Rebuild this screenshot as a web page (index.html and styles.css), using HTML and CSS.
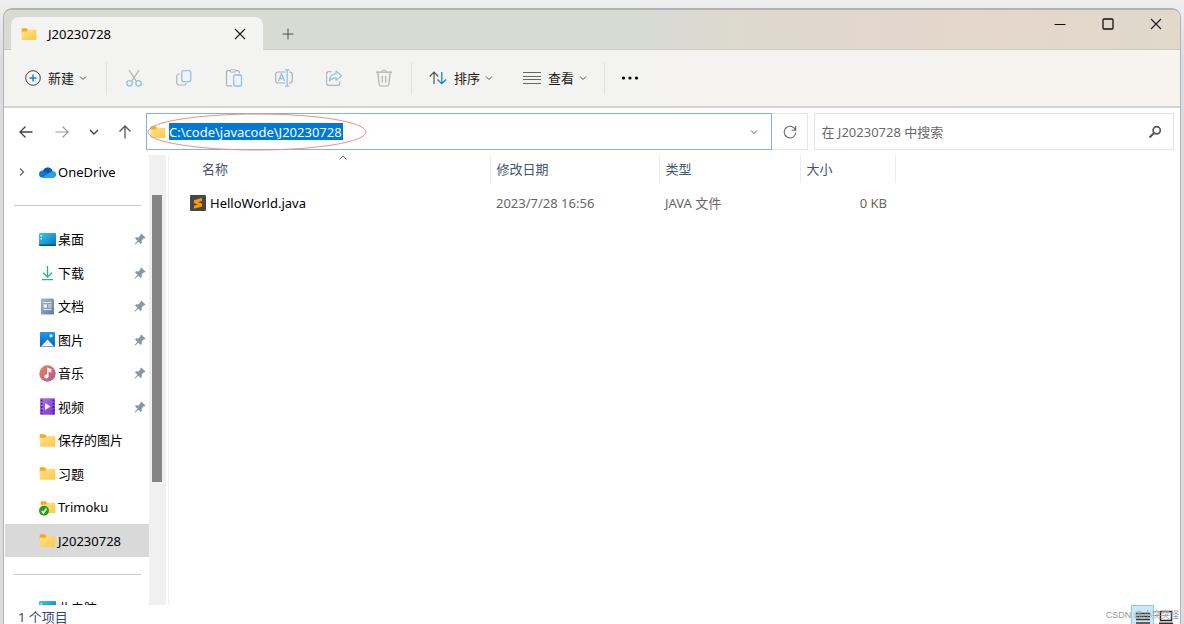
FILE: index.html
```html
<!DOCTYPE html>
<html lang="zh-CN">
<head>
<meta charset="utf-8">
<meta name="viewport" content="width=device-width, initial-scale=1">
<title>J20230728</title>
<link rel="stylesheet" href="styles.css">
</head>
<body>
<svg class="defs" aria-hidden="true">
  <defs>
    <linearGradient id="g-folder" x1="0" y1="0" x2="1" y2="1"><stop offset="0" stop-color="#ffe391"/><stop offset="1" stop-color="#ffc842"/></linearGradient>
    <linearGradient id="g-desk" x1="0" y1="0" x2="1" y2="1"><stop offset="0" stop-color="#35cfe6"/><stop offset="1" stop-color="#0a6cc0"/></linearGradient>
    <linearGradient id="g-doc" x1="0" y1="0" x2="1" y2="1"><stop offset="0" stop-color="#a3bad2"/><stop offset="1" stop-color="#5f7d9f"/></linearGradient>
    <linearGradient id="g-pic" x1="0" y1="0" x2="0" y2="1"><stop offset="0" stop-color="#1c9be8"/><stop offset="1" stop-color="#0665b8"/></linearGradient>
    <linearGradient id="g-music" x1="0" y1="0" x2="1" y2="1"><stop offset="0" stop-color="#ef8356"/><stop offset="1" stop-color="#b0579c"/></linearGradient>
    <linearGradient id="g-video" x1="0" y1="0" x2="1" y2="1"><stop offset="0" stop-color="#b071f0"/><stop offset="1" stop-color="#7a35cf"/></linearGradient>
  </defs>
  <symbol id="folder" viewBox="0 0 16 16"><path d="M1 2.2h4.4l1.6 1.5V7H.7V2.600q0-.4.3-.4z" fill="#f9a912"/><path d="M.7 5.400h5.100L7.300 3.800h7.500q.5 0 .5.500v9.100q0 .5-.5.500H1.200q-.5 0-.5-.5z" fill="url(#g-folder)"/></symbol>
  <symbol id="chev" viewBox="0 0 8 8"><path d="M1 2.500l3 3 3-3" fill="none" stroke="currentColor"/></symbol>
  <symbol id="pin" viewBox="0 0 12 12"><path d="M7.200.4l4.300 4.200-1 .9-.6-.2-2.200 2.300.1 2.400-1.100 1L4.400 8.700.9 11.700l-.5-.5 3.100-3.400L1 5.400l1-1.100 2.500.1L6.700 2.100l-.4-.7z" fill="#8797a3"/></symbol>
  <symbol id="cross" viewBox="0 0 12 12"><path d="M1 1l10 10M11 1L1 11" fill="none" stroke="currentColor" stroke-width="1.100"/></symbol>
  <symbol id="desktop" viewBox="0 0 17 14"><rect width="17" height="13" y=".5" rx="1" fill="url(#g-desk)"/><path d="M1.500 2.500h1.500v1.500H1.500zM1.500 5.500h1.500V7H1.500z" fill="#c9f5fb"/><path d="M0 12h17v.5q0 1-1 1H1q-1 0-1-1z" fill="#07528f"/></symbol>
</svg>

<div class="window">
  <header class="titlebar">
    <div class="tab">
      <svg class="i16"><use href="#folder"/></svg>
      <span class="tab-name">J20230728</span>
      <button class="plain" aria-label="关闭标签页"><svg class="i12"><use href="#cross"/></svg></button>
    </div>
    <button class="plain new-tab" aria-label="新标签页"><svg class="i12" viewBox="0 0 12 12"><path d="M6 .5v11M.5 6h11" fill="none" stroke="#555"/></svg></button>
    <div class="win-buttons">
      <button class="plain" aria-label="最小化"><svg class="i12" viewBox="0 0 12 12"><path d="M.5 6.500h11" stroke="#111" stroke-width="1.200"/></svg></button>
      <button class="plain" aria-label="最大化"><svg class="i12" viewBox="0 0 12 12"><rect x="1" y="1" width="10" height="10" rx="1" fill="none" stroke="#111" stroke-width="1.300"/></svg></button>
      <button class="plain" aria-label="关闭"><svg class="i12"><use href="#cross"/></svg></button>
    </div>
  </header>

  <div class="toolbar">
    <button class="tool">
      <svg class="i16" viewBox="0 0 16 16" fill="none"><circle cx="8" cy="8" r="7.300" stroke="#444"/><path d="M8 4.500v7M4.500 8h7" stroke="#1b7fd0" stroke-width="1.400"/></svg>
      <span>新建</span><svg class="i8"><use href="#chev"/></svg>
    </button>
    <div class="tool-icons">
      <button class="plain" aria-label="剪切"><svg class="i18" viewBox="0 0 18 18" fill="none"><path d="M4 1l7.500 11.300M14 1L6.500 12.300" stroke="#b0b0b0" stroke-width="1.200"/><circle cx="4.500" cy="14.300" r="2.700" stroke="#8ec3ec" stroke-width="1.300"/><circle cx="13.500" cy="14.300" r="2.700" stroke="#8ec3ec" stroke-width="1.300"/></svg></button>
      <button class="plain" aria-label="复制"><svg class="i18" viewBox="0 0 18 18" fill="none"><path d="M5 5H4Q1.700 5 1.700 7.300v6.200q0 2.500 2.500 2.500h4.500q2.300 0 2.500-2" stroke="#b5b5b5" stroke-width="1.200"/><rect x="6.800" y="1.700" width="9" height="11" rx="2" stroke="#8ec3ec" stroke-width="1.300"/></svg></button>
      <button class="plain" aria-label="粘贴"><svg class="i18" viewBox="0 0 18 18" fill="none"><path d="M7 16.800H2.800q-1.300 0-1.300-1.300V3q0-1.300 1.300-1.300H5m6 0h2q1.300 0 1.300 1.300v1.500" stroke="#b0b0b0" stroke-width="1.200"/><rect x="5" y=".7" width="6" height="2.400" rx="1.200" stroke="#b0b0b0"/><rect x="8.700" y="6" width="7.800" height="11" rx="1.300" stroke="#8ec3ec" stroke-width="1.300"/></svg></button>
      <button class="plain" aria-label="重命名"><svg class="i18" viewBox="0 0 18 18" fill="none"><path d="M10.500 3H3Q.7 3 .7 5.300v6.400Q.7 14 3 14h7.500M14 3h.8q2.500 0 2.500 2.500v6q0 2.500-2.500 2.500H14" stroke="#b0b0b0" stroke-width="1.200"/><path d="M3.500 12l3-7.200 3 7.200M4.600 9.500h3.800M12.200 1v16M10 .8h4.400M10 17.200h4.400" stroke="#8ec3ec" stroke-width="1.300"/></svg></button>
      <button class="plain" aria-label="共享"><svg class="i18" viewBox="0 0 18 18" fill="none"><path d="M6.500 2.700H4Q1.600 2.700 1.600 5v9q0 2.300 2.300 2.300h8.600q2.300 0 2.300-2.300v-1.500" stroke="#b5b5b5" stroke-width="1.200"/><path d="M11 2l5.500 4.700L11 11.400V8.900Q7 8.600 4.500 11.800 5 5 11 4.600z" stroke="#8ec3ec" stroke-width="1.200" stroke-linejoin="round"/></svg></button>
      <button class="plain" aria-label="删除"><svg class="i18" viewBox="0 0 18 18" fill="none"><path d="M1 3.200h16M6.800 3q.2-2 2.200-2t2.200 2M2.800 3.500l1.400 12q.2 1.500 1.600 1.500h6.400q1.400 0 1.600-1.500l1.400-12M7.300 7v6.500M10.700 7v6.500" stroke="#b0b0b0" stroke-width="1.200"/></svg></button>
    </div>
    <button class="tool sort">
      <svg class="i18" viewBox="0 0 18 18" fill="none"><path d="M5 15V3.500M.7 7.500L5 3l4.300 4.500" stroke="#555" stroke-width="1.200"/><path d="M12.800 3v11.500M8.500 10.500l4.300 4.200 4.300-4.200" stroke="#1b7fd0" stroke-width="1.300"/></svg>
      <span>排序</span><svg class="i8"><use href="#chev"/></svg>
    </button>
    <button class="tool view">
      <svg class="i18" viewBox="0 0 18 18"><path d="M0 3.500h18M0 7.500h18M0 10.500h18M0 14.500h18" stroke="#666" stroke-width="1.100"/></svg>
      <span>查看</span><svg class="i8"><use href="#chev"/></svg>
    </button>
    <button class="plain more" aria-label="更多"><svg class="i18" viewBox="0 0 18 18"><circle cx="2.500" cy="9" r="1.600"/><circle cx="9" cy="9" r="1.600"/><circle cx="15.500" cy="9" r="1.600"/></svg></button>
  </div>

  <div class="navbar">
    <div class="nav-buttons">
      <button class="plain" aria-label="后退"><svg class="i14" viewBox="0 0 14 14"><path d="M13.500 7H1M6.500 1.500L1 7l5.500 5.500" fill="none" stroke="#444" stroke-width="1.300"/></svg></button>
      <button class="plain" aria-label="前进"><svg class="i14" viewBox="0 0 14 14"><path d="M.5 7H13M7.500 1.500L13 7l-5.500 5.500" fill="none" stroke="#999" stroke-width="1.200"/></svg></button>
      <button class="plain" aria-label="最近的位置"><svg class="i14" viewBox="0 0 14 14"><path d="M3 5l4 4 4-4" fill="none" stroke="#444" stroke-width="1.400"/></svg></button>
      <button class="plain" aria-label="向上"><svg class="i14" viewBox="0 0 14 14"><path d="M7 13.500V1M1.500 6.500L7 1l5.500 5.500" fill="none" stroke="#555" stroke-width="1.300"/></svg></button>
    </div>
    <div class="address">
      <svg class="i16"><use href="#folder"/></svg>
      <input class="path" type="text" aria-label="地址" value="C:\code\javacode\J20230728">
      <button class="plain drop" aria-label="以前的位置"><svg class="i8"><use href="#chev"/></svg></button>
      <svg class="mark" viewBox="0 0 220 38" aria-hidden="true"><ellipse cx="110" cy="19" rx="109" ry="18" fill="none" stroke="#f08a8a"/></svg>
    </div>
    <button class="plain refresh" aria-label="刷新"><svg class="i14" viewBox="0 0 14 14"><path d="M12.500 5.200A5.800 5.800 0 1 0 12.800 7.500M12.700 1v4.300H8.500" fill="none" stroke="#666" stroke-width="1.100"/></svg></button>
    <div class="search">
      <input type="search" aria-label="搜索" placeholder="在 J20230728 中搜索">
      <svg class="i14" viewBox="0 0 14 14" fill="none" stroke="#555"><circle cx="8.700" cy="5.300" r="3.600" stroke-width="1.700"/><path d="M6 8L1.500 12.500" stroke-width="2"/></svg>
    </div>
  </div>

  <main class="content">
    <nav class="side" aria-label="导航窗格">
      <ul>
        <li class="row has-arrow"><svg class="i8 arrow" viewBox="0 0 8 8"><path d="M2 .5L5.500 4 2 7.500" fill="none" stroke="#666" stroke-width="1.300"/></svg><svg class="i17" viewBox="0 0 17 14"><path d="M4 5Q6 1.500 9.500 2q3 .5 4 3.500Q17 6 17 9q-.2 3-3.200 3.200H4Q0 12 0 8.500 .2 5.200 4 5z" fill="#0f78d4"/><path d="M4 5Q6 1.500 9.500 2q3 .5 4 3.500L9 8z" fill="#0a5bb0"/><path d="M3.200 12L13.500 5.500Q17 6 17 9q-.2 3-3.200 3.200H4z" fill="#28a0ea"/></svg><a href="#">OneDrive</a></li>
        <li class="line"></li>
        <li class="row"><svg class="i17"><use href="#desktop"/></svg><a href="#">桌面</a><svg class="i12 pin"><use href="#pin"/></svg></li>
        <li class="row"><svg class="i17" viewBox="0 0 17 17"><path d="M8.500 2v11M4 8.800l4.500 4.400L13 8.800M3 15.700h11" fill="none" stroke="#27b08b" stroke-width="1.300"/></svg><a href="#">下载</a><svg class="i12 pin"><use href="#pin"/></svg></li>
        <li class="row"><svg class="i17" viewBox="0 0 17 17"><rect x="2" y=".5" width="13" height="16" rx="1" fill="url(#g-doc)"/><path d="M4.500 4.500h8M9 7h3.500M9 9h3.500M4.500 11.500h8" stroke="#e8f0f8" stroke-width="1.200"/><rect x="4.500" y="6.300" width="3.500" height="3.500" fill="#e8f0f8"/></svg><a href="#">文档</a><svg class="i12 pin"><use href="#pin"/></svg></li>
        <li class="row"><svg class="i17" viewBox="0 0 17 17"><rect x="1" y="1" width="15" height="15" rx="1" fill="url(#g-pic)"/><path d="M2 15.500l6.500-7 6.500 7z" fill="#eef7ff"/><circle cx="12" cy="4.800" r="1.500" fill="#fff"/></svg><a href="#">图片</a><svg class="i12 pin"><use href="#pin"/></svg></li>
        <li class="row"><svg class="i17" viewBox="0 0 17 17"><circle cx="8.500" cy="8.500" r="8.200" fill="url(#g-music)"/><path d="M8.800 11.300V3.500l2.800 1v2L9.500 6" fill="none" stroke="#fff" stroke-width="1.400"/><circle cx="7.400" cy="11.500" r="2.100" fill="#fff"/></svg><a href="#">音乐</a><svg class="i12 pin"><use href="#pin"/></svg></li>
        <li class="row"><svg class="i17" viewBox="0 0 17 17"><rect x="1" y=".3" width="15" height="16.400" rx="1" fill="url(#g-video)"/><path d="M2.700 1.500v14.500M14.300 1.500v14.500" stroke="#3b1d70" stroke-width="1.500" stroke-dasharray="1.700 1.700"/><path d="M6 5l5.500 3.500L6 12z" fill="#fff"/></svg><a href="#">视频</a><svg class="i12 pin"><use href="#pin"/></svg></li>
        <li class="row"><svg class="i17"><use href="#folder"/></svg><a href="#">保存的图片</a></li>
        <li class="row"><svg class="i17"><use href="#folder"/></svg><a href="#">习题</a></li>
        <li class="row"><svg class="i17" viewBox="0 0 17 17"><use href="#folder" x="1" width="16" height="16"/><circle cx="5" cy="11.700" r="5" fill="#2a9d1f"/><path d="M2.700 12l1.700 2 3-4.500" fill="none" stroke="#fff" stroke-width="1.400"/></svg><a href="#">Trimoku</a></li>
        <li class="row current"><svg class="i17"><use href="#folder"/></svg><a href="#" aria-current="page">J20230728</a></li>
        <li class="line"></li>
        <li class="row"><svg class="i17"><use href="#desktop"/></svg><a href="#">此电脑</a></li>
      </ul>
    </nav>
    <div class="scroll"><div class="thumb"></div></div>
    <section class="files">
      <table>
        <colgroup><col class="c-name"><col class="c-date"><col class="c-type"><col class="c-size"></colgroup>
        <thead><tr>
          <th class="sorted">名称<svg class="i8 caret" viewBox="0 0 8 8"><path d="M.5 5.500L4 2l3.500 3.500" fill="none" stroke="#777"/></svg></th>
          <th>修改日期</th><th>类型</th><th>大小</th>
        </tr></thead>
        <tbody><tr>
          <td><span class="file"><svg class="i16" viewBox="0 0 16 16"><rect width="16" height="16" rx="1" fill="#474747"/><path d="M12 2.800v3.100L7.800 7.200 12 8.500v3L4 13.800v-3l4.200-1.300L4 8.200v-3z" fill="#ff9800"/></svg>HelloWorld.java</span></td>
          <td>2023/7/28 16:56</td><td>JAVA 文件</td><td class="num">0 KB</td>
        </tr></tbody>
      </table>
    </section>
  </main>

  <footer class="status">
    <span>1 个项目</span>
    <div class="views">
      <button class="plain on" aria-label="详细信息"><svg class="view-icon" viewBox="0 0 14 18"><path d="M0 7.500h14M0 10.500h14M0 13.500h14M0 17h14" stroke="#333" stroke-width="1.500"/></svg></button>
      <button class="plain" aria-label="大图标"><svg class="view-icon" viewBox="0 0 14 18"><rect x="1.500" y="5.500" width="11" height="9" fill="none" stroke="#222" stroke-width="1.500"/><path d="M0 17.500h14" stroke="#333" stroke-width="2"/></svg></button>
    </div>
  </footer>
</div>
<span class="watermark">CSDN @小突突怪</span>
</body>
</html>
```
FILE: styles.css
```css
* { box-sizing: border-box; }

body {
  margin: 0;
  height: 100vh;
  overflow: hidden;
  display: flex;
  padding: 8px 3px 0 3px;
  background: linear-gradient(#f0f0f0, #dcdcde 60px);
  font: 13px/18px "Noto Sans", "Noto Sans CJK SC", sans-serif;
  color: #1a1a1a;
}

.defs { position: absolute; width: 0; height: 0; }

svg { display: block; flex: none; }
.i8 { width: 8px; height: 8px; }
.i12 { width: 12px; height: 12px; }
.i14 { width: 14px; height: 14px; }
.i16 { width: 16px; height: 16px; }
.i17 { width: 17px; height: 17px; }
.i18 { width: 18px; height: 18px; }

button, input { font: inherit; color: inherit; }
.plain {
  display: grid;
  place-items: center;
  padding: 0;
  border: 0;
  background: none;
}

.window {
  flex: 1;
  min-width: 0;
  display: flex;
  flex-direction: column;
  overflow: hidden;
  border: 1px solid #b0b2b3;
  border-top-width: 2px;
  border-bottom: 0;
  border-radius: 9px 9px 0 0;
  background: #fff;
}

.titlebar {
  display: flex;
  flex: none;
  height: 40px;
  padding-left: 7px;
  background: linear-gradient(90deg, #d8dad4 0 55%, #dddace 62%, #e1d8cd 70%, #e5d7cc 85%, #e0d9cc);
  box-shadow: inset 0 -1px #cbcac2;
}
.tab {
  display: flex;
  align-items: center;
  gap: 11px;
  width: 252px;
  margin-top: 7px;
  padding: 0 17px 0 10px;
  border-radius: 8px 8px 0 0;
  background: #f3f3f1;
}
.tab-name { flex: 1; color: #000; }
.new-tab { width: 50px; margin-top: 8px; }
.win-buttons { display: flex; margin-left: auto; height: 28px; }
.win-buttons button { width: 48px; }

.toolbar {
  display: flex;
  flex: none;
  align-items: center;
  height: 58px;
  padding-left: 21px;
  border-bottom: 2px solid #d5d3cf;
  background: linear-gradient(90deg, #f3f3f1 50%, #f7f3ee);
}
.tool {
  display: flex;
  align-items: center;
  gap: 7px;
  padding: 0;
  border: 0;
  background: none;
}
.tool .i8 { color: #555; margin-left: -2px; }
.tool-icons {
  display: flex;
  align-items: center;
  height: 33px;
  margin: 0 17px 0 19px;
  padding: 0 2px;
  border: solid #e2e2e0;
  border-width: 0 1px;
}
.tool-icons button { width: 50px; height: 32px; }
.view { margin-left: 30px; }
.more {
  height: 33px;
  margin-left: 17px;
  padding-left: 16px;
  border-left: 1px solid #e2e2e0;
}

.navbar {
  display: flex;
  flex: none;
  height: 47px;
  padding: 5px 6px 5px 5px;
}
.nav-buttons {
  display: grid;
  grid-template-columns: 34px 38px 25px 37px;
  width: 137px;
}
.address {
  position: relative;
  display: flex;
  flex: 646;
  align-items: center;
  padding-left: 3px;
  border: 1px solid #7db5e2;
}
.path {
  width: 174px;
  height: 17px;
  margin-left: 3px;
  padding: 0;
  border: 0;
  background: #0078d7;
  color: #fff;
  field-sizing: content;
}
.drop { width: 35px; height: 35px; margin-left: auto; color: #555; }
.mark {
  position: absolute;
  left: 0;
  top: -1px;
  width: 220px;
  height: 38px;
}
.refresh { width: 36px; border: solid #e6e6e6; border-width: 1px 1px 1px 0; }
.search {
  display: flex;
  flex: 354;
  align-items: center;
  margin-left: 6px;
  padding: 0 11px 0 6px;
  border: 1px solid #e3e3e3;
}
.search input { flex: 1; min-width: 0; padding: 0; border: 0; background: none; }
.search input::placeholder { color: #6a6a6a; opacity: 1; }

.content { display: flex; flex: 1; min-height: 0; }
.side { width: 145px; overflow: hidden; }
.side ul { margin: 0; padding: 0 0 0 1px; list-style: none; }
.side li { display: flex; align-items: center; height: 33px; }
.side li:nth-child(odd) { height: 34px; }
.row { gap: 2px; padding: 0 3px 0 34px; }
.row a { flex: 1; color: #000; text-decoration: none; white-space: nowrap; }
.side .has-arrow { padding-left: 13px; }
.arrow { margin-right: 11px; }
.current { background: #d9d9d9; }
.line::before {
  content: "";
  flex: 1;
  height: 1px;
  margin: 0 8px 0 9px;
  background: #c8c8c8;
}
.scroll {
  width: 17px;
  padding: 40px 4px 0 3px;
  background: #f0f0f0;
}
.thumb { height: 70%; background: #858585; }

.files { flex: 1; margin-left: 2px; border-left: 1px solid #f0f0f0; }
table { table-layout: fixed; width: 726px; border-collapse: collapse; }
.c-name { width: 321px; }
.c-date { width: 169px; }
.c-type { width: 141px; }
.c-size { width: 95px; }
th {
  height: 28px;
  padding: 0 6px;
  border-right: 1px solid #ececec;
  color: #44546c;
  font-weight: 400;
  text-align: left;
}
th.sorted { position: relative; padding-left: 33px; }
.caret { position: absolute; left: 170px; top: -1px; }
td { height: 40px; padding: 0 6px; color: #666; }
td:first-child { padding-left: 21px; color: #000; }
.num { text-align: right; padding-right: 8px; }
.file { display: flex; align-items: center; gap: 4px; }

.status {
  display: flex;
  flex: none;
  height: 19px;
  padding: 3px 3px 0 14px;
  color: #34496a;
  overflow: hidden;
}
.views { display: flex; margin: -3px 0 0 auto; }
.views button { width: 23px; height: 20px; }
.views .on { border: 1px solid #8accec; background: #cce8f8; }
.view-icon { width: 14px; height: 18px; }

.watermark {
  position: absolute;
  right: 5px;
  bottom: 0;
  color: #999;
  font-family: "Liberation Sans", "Noto Sans CJK SC", sans-serif;
  font-size: 9px;
}
```
